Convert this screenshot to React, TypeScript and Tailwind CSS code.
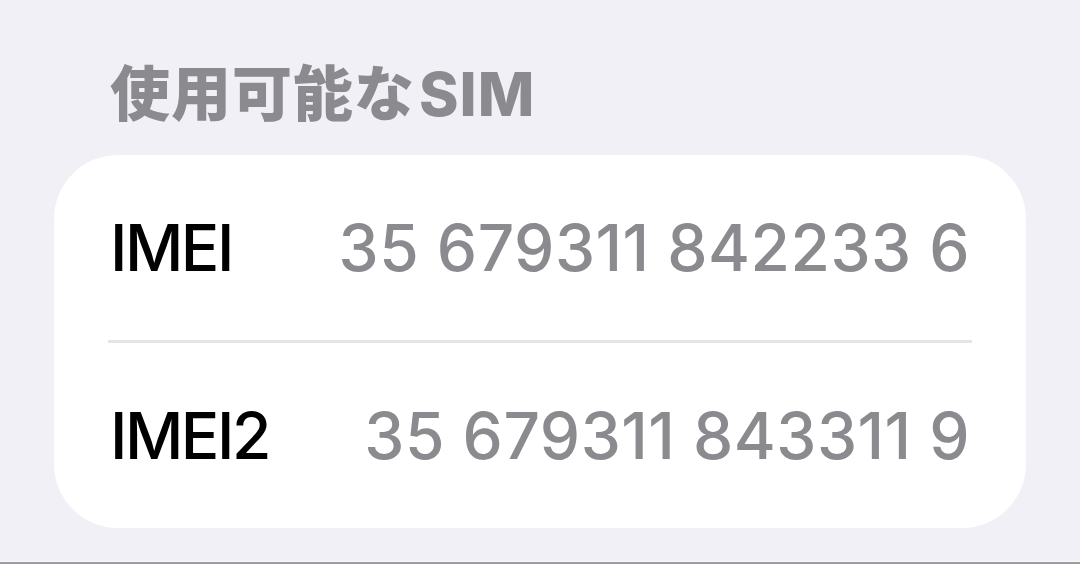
export default function App() {
  const rows = [
    { label: "IMEI", value: "35 679311 842233 6" },
    { label: "IMEI2", value: "35 679311 843311 9" },
  ];

  return (
    <div className="w-[1080px] h-[564px] bg-[#f1f0f6] flex flex-col overflow-hidden font-['Inter','Noto_Sans_CJK_JP',sans-serif]">
      {/* section header */}
      <div className="h-[155px] pl-[110px] pt-[58px]">
        <h2 className="text-[60px] leading-[72px] font-extrabold text-[#8a8a8f] tracking-[1px]">
          使用可能な<span className="ml-[4px]">SIM</span>
        </h2>
      </div>

      {/* card */}
      <div className="mx-[54px] bg-white rounded-[64px] flex flex-col">
        {rows.map((row, i) => (
          <div key={row.label} className="flex flex-col">
            {i > 0 && <div className="mx-[54px] h-[3px] bg-[#e4e4e9]" />}
            <div className="h-[185px] px-[56px] flex items-center justify-between">
              <span className="text-[64px] font-medium text-black tracking-[-2.5px]">{row.label}</span>
              <span className="text-[64px] font-medium text-[#8a8a8f] tracking-[0.5px]">{row.value}</span>
            </div>
          </div>
        ))}
      </div>

      <div className="flex-1" />
      <div className="h-px bg-[#fafafc]" />
      <div className="h-[2px] bg-[#9b9b9f]" />
    </div>
  );
}
